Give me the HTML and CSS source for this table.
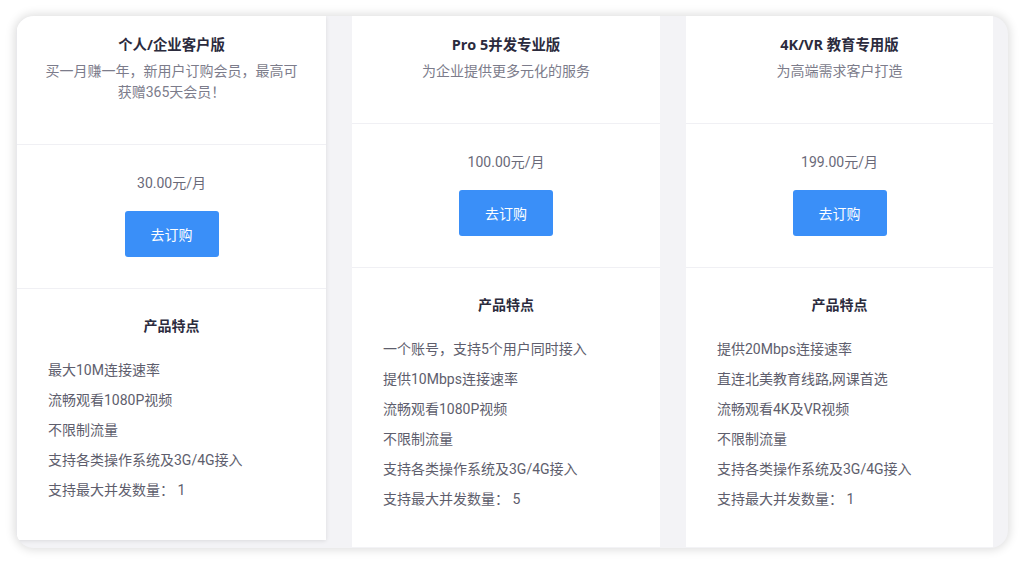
FILE: index.html
```html
<!DOCTYPE html>
<html lang="zh-CN">
<head>
<meta charset="utf-8">
<title>套餐</title>
<link rel="stylesheet" href="styles.css">
</head>
<body>
<div class="frame">
  <div class="card card-first">
    <div class="head">
      <div class="title">个人/企业客户版</div>
      <div class="desc">买一月赚一年，新用户订购会员，最高可获赠365天会员！</div>
    </div>
    <div class="price-box">
      <div class="price">30.00元/月</div>
      <button class="buy">去订购</button>
    </div>
    <div class="features">
      <div class="ftitle">产品特点</div>
      <ul class="list">
        <li>最大10M连接速率</li>
        <li>流畅观看1080P视频</li>
        <li>不限制流量</li>
        <li>支持各类操作系统及3G/4G接入</li>
        <li>支持最大并发数量： 1</li>
      </ul>
    </div>
  </div>
  <div class="card">
    <div class="head">
      <div class="title">Pro 5并发专业版</div>
      <div class="desc">为企业提供更多元化的服务</div>
    </div>
    <div class="price-box">
      <div class="price">100.00元/月</div>
      <button class="buy">去订购</button>
    </div>
    <div class="features">
      <div class="ftitle">产品特点</div>
      <ul class="list">
        <li>一个账号，支持5个用户同时接入</li>
        <li>提供10Mbps连接速率</li>
        <li>流畅观看1080P视频</li>
        <li>不限制流量</li>
        <li>支持各类操作系统及3G/4G接入</li>
        <li>支持最大并发数量： 5</li>
      </ul>
    </div>
  </div>
  <div class="card card-last">
    <div class="head">
      <div class="title">4K/VR 教育专用版</div>
      <div class="desc">为高端需求客户打造</div>
    </div>
    <div class="price-box">
      <div class="price">199.00元/月</div>
      <button class="buy">去订购</button>
    </div>
    <div class="features">
      <div class="ftitle">产品特点</div>
      <ul class="list">
        <li>提供20Mbps连接速率</li>
        <li>直连北美教育线路,网课首选</li>
        <li>流畅观看4K及VR视频</li>
        <li>不限制流量</li>
        <li>支持各类操作系统及3G/4G接入</li>
        <li>支持最大并发数量： 1</li>
      </ul>
    </div>
  </div>
</div>
</body>
</html>
```

FILE: styles.css
```css
* { box-sizing: border-box; }
html, body { margin: 0; padding: 0; background: #ffffff; }
body {
  width: 1024px;
  height: 563px;
  overflow: hidden;
  padding: 16px;
  font-family: Roboto, "Noto Sans CJK SC", sans-serif;
}
.frame {
  width: 992px;
  height: 532px;
  border-radius: 18px;
  background: #f3f3f6;
  box-shadow: 0 0 10px 2px rgba(0, 0, 0, 0.13);
  overflow: hidden;
  display: flex;
  align-items: flex-start;
  gap: 26px;
  padding-left: 1px;
}
.card {
  width: 308px;
  height: 531px;
  background: #ffffff;
  display: flex;
  flex-direction: column;
}
.card-first {
  width: 309px;
  height: 524px;
  box-shadow: 0 1px 4px rgba(0, 0, 0, 0.1);
}
.card-last { width: 307px; }
.head {
  padding: 18px 24px 41px;
  text-align: center;
  border-bottom: 1px solid #f0f0f4;
}
.title {
  font-family: "Open Sans", "Noto Sans CJK SC", sans-serif;
  font-weight: 700;
  font-size: 14.4px;
  line-height: 22px;
  color: #2b2b3d;
}
.desc {
  margin-top: 5px;
  font-size: 14px;
  line-height: 21px;
  color: #7c7c8b;
}
.price-box {
  padding: 28px 0 31px;
  display: flex;
  flex-direction: column;
  align-items: center;
  border-bottom: 1px solid #f0f0f4;
}
.price {
  font-size: 14px;
  line-height: 20px;
  color: #6a6a79;
}
.buy {
  margin-top: 18px;
  width: 94px;
  height: 46px;
  border: none;
  border-radius: 3px;
  background: #3a8ff8;
  color: #ffffff;
  font-family: Roboto, "Noto Sans CJK SC", sans-serif;
  font-size: 14px;
  padding: 0;
}
.features {
  padding: 25px 0 0 31px;
}
.ftitle {
  padding-right: 31px;
  text-align: center;
  font-family: "Noto Sans CJK SC", sans-serif;
  font-weight: 700;
  font-size: 14px;
  line-height: 22px;
  color: #2b2b3d;
}
.list {
  list-style: none;
  margin: 19px 0 0;
  padding: 0;
}
.list li {
  font-size: 14px;
  line-height: 30px;
  color: #5e5e6d;
}
```
